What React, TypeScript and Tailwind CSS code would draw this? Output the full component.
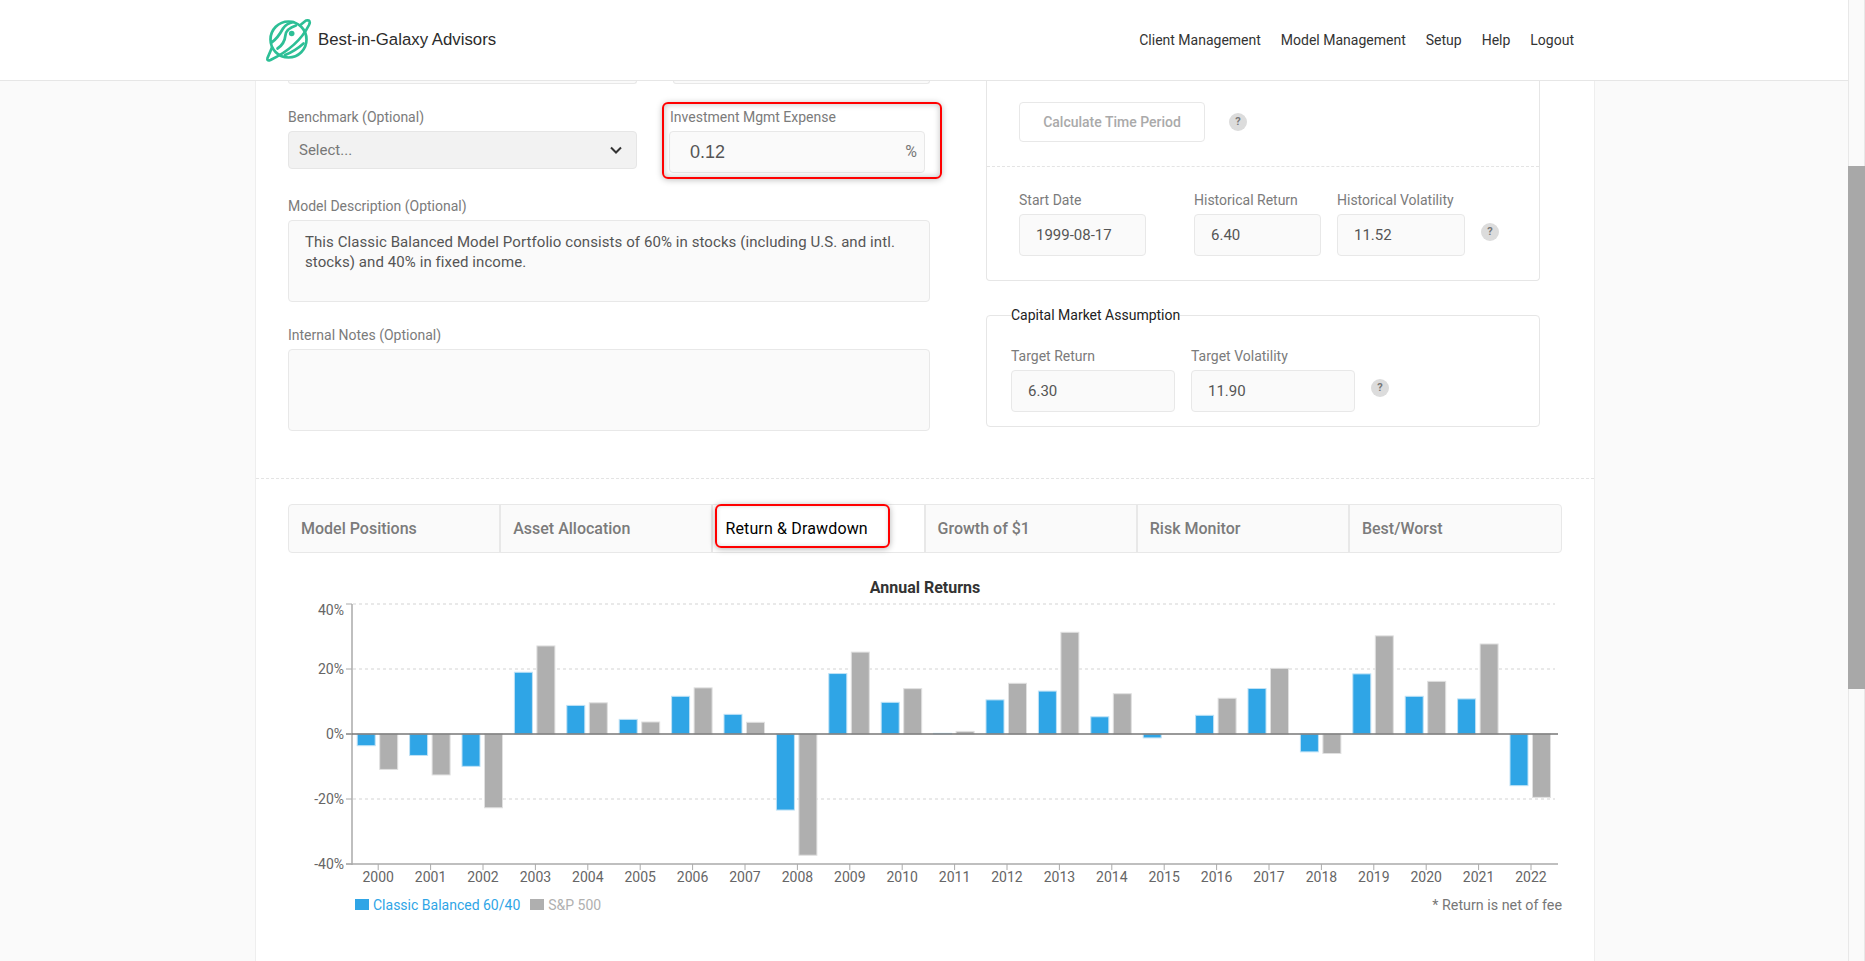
const returns = [
  { year: 2000, model: -3.6, spx: -10.9 },
  { year: 2001, model: -6.6, spx: -12.6 },
  { year: 2002, model: -9.95, spx: -22.7 },
  { year: 2003, model: 19, spx: 27.1 },
  { year: 2004, model: 8.8, spx: 9.6 },
  { year: 2005, model: 4.5, spx: 3.7 },
  { year: 2006, model: 11.6, spx: 14.2 },
  { year: 2007, model: 6.05, spx: 3.6 },
  { year: 2008, model: -23.4, spx: -37.3 },
  { year: 2009, model: 18.6, spx: 25.2 },
  { year: 2010, model: 9.75, spx: 13.95 },
  { year: 2011, model: 0.2, spx: 0.8 },
  { year: 2012, model: 10.5, spx: 15.6 },
  { year: 2013, model: 13.2, spx: 31.3 },
  { year: 2014, model: 5.3, spx: 12.4 },
  { year: 2015, model: -1.2, spx: 0 },
  { year: 2016, model: 5.75, spx: 11 },
  { year: 2017, model: 14, spx: 20.2 },
  { year: 2018, model: -5.5, spx: -6 },
  { year: 2019, model: 18.5, spx: 30.2 },
  { year: 2020, model: 11.6, spx: 16.2 },
  { year: 2021, model: 10.8, spx: 27.7 },
  { year: 2022, model: -15.9, spx: -19.5 },
];

const navItems = ["Client Management", "Model Management", "Setup", "Help", "Logout"];
const tabs = ["Model Positions", "Asset Allocation", "Return & Drawdown", "Growth of $1", "Risk Monitor", "Best/Worst"];

function Logo() {
  return (
    <svg width="47" height="46" viewBox="0 0 47 46" fill="none" stroke="#2dbf96" strokeWidth="2.700" strokeLinecap="round" strokeLinejoin="round">
      <circle cx="23.500" cy="22.500" r="18" />
      {/* ring */}
      <path d="M7 30.500L2.500 41Q1.500 44.500 5.500 43C20 36 36 24 44 8Q46.500 2.500 41 3.500L36 7.500" />
      {/* stripes */}
      <path d="M6.500 25.500C12 22 15 17 18 11.500C20 8 24 6 28.500 5" />
      <path d="M12.500 31.500C18 28 20 23 20.500 18C21 13.500 25 10.500 31 8.500" />
      <path d="M20 38C28 35 33.500 31 38.500 26.500" />
      <circle cx="26.700" cy="16.500" r="2.800" fill="#2dbf96" stroke="none" />
    </svg>
  );
}

function HelpDot() {
  return (
    <span className="flex h-[18px] w-[18px] shrink-0 items-center justify-center rounded-full bg-[#dcdcdc] text-[11px] font-bold text-[#777]">
      ?
    </span>
  );
}

function Label({ children }: { children: React.ReactNode }) {
  return <div className="mb-1 h-5 text-sm leading-5 text-[#7b7b7b]">{children}</div>;
}

function ValueBox({ value, className }: { value: string; className: string }) {
  return (
    <div className={`flex h-[42px] items-center rounded border border-[#e8e8e8] bg-[#fafafa] pl-4 text-[15px] text-[#555] ${className}`}>
      {value}
    </div>
  );
}

function AnnualReturnsChart() {
  const zero = 734;
  const pct = 3.25;
  const band = 52.4;
  const left = 352;
  const grid = [
    { label: "40%", y: 604, textY: 610 },
    { label: "20%", y: 669, textY: 669 },
    { label: "0%", y: 734, textY: 734 },
    { label: "-20%", y: 799, textY: 799 },
    { label: "-40%", y: 864, textY: 864 },
  ];

  return (
    <svg width="1274" height="294" viewBox="288 598 1274 294" className="block" fontFamily="Roboto, sans-serif">
      {grid.map((g) =>
        g.y === 734 || g.y === 864 ? null : (
          <line key={g.y} x1={353} x2={1555} y1={g.y} y2={g.y} stroke="#e2e2e2" strokeWidth="1.500" strokeDasharray="3 3" />
        ),
      )}
      {returns.map((r, i) => {
        const x = left + band * i + 26.2;
        const bar = (value: number, bx: number, fill: string, edge: string) => {
          const h = Math.abs(value) * pct;
          return (
            <rect x={bx} y={value >= 0 ? zero - h : zero} width="18" height={h} fill={fill} stroke={edge} strokeWidth="1" />
          );
        };
        return (
          <g key={r.year}>
            {bar(r.model, x - 21, "#2fa5e6", "#bfe2f6")}
            {bar(r.spx, x + 1.5, "#afafaf", "#e0e0e0")}
            <line x1={x} x2={x} y1={864} y2={870} stroke="#aaa" />
            <text x={x} y={882} textAnchor="middle" fontSize="14" fill="#666">
              {r.year}
            </text>
          </g>
        );
      })}
      <line x1={352} x2={352} y1={604} y2={865} stroke="#aaa" strokeWidth="1.500" />
      <line x1={346} x2={1558} y1={864} y2={864} stroke="#aaa" strokeWidth="1.500" />
      <line x1={346} x2={1558} y1={734} y2={734} stroke="#777" strokeWidth="1.500" />
      {grid.map((g) => (
        <g key={g.label}>
          <line x1={346} x2={352} y1={g.y} y2={g.y} stroke="#aaa" />
          <text x={344} y={g.textY + 5} textAnchor="end" fontSize="14" fill="#666">
            {g.label}
          </text>
        </g>
      ))}
    </svg>
  );
}

export default function App() {
  return (
    <div className="flex h-[961px] overflow-hidden bg-[#fafafa] font-['Roboto',sans-serif]">
      <div className="flex min-w-0 flex-1 flex-col">
        {/* Top bar */}
        <header className="flex h-[81px] shrink-0 items-center justify-between border-b border-[#e6e6e6] bg-white pl-[265px] pr-[274px]">
          <div className="flex items-center gap-[6px]">
            <Logo />
            <span className="font-['Liberation_Sans',sans-serif] text-[16.800px] text-[#2b2b2b]">Best-in-Galaxy Advisors</span>
          </div>
          <nav className="flex gap-[20px] text-sm font-normal text-[#333]">
            {navItems.map((item) => (
              <span key={item}>{item}</span>
            ))}
          </nav>
        </header>

        {/* Page panel */}
        <main className="ml-[255px] w-[1340px] flex-1 border-x border-[#eeeeee] bg-white">
          <div className="flex h-[398px] border-b border-dashed border-[#e4e4e4] pl-[32px]">
            {/* Left form column */}
            <div className="w-[642px]">
              <div className="flex justify-between">
                <div className="h-[3px] w-[349px] rounded-b border-x border-b border-[#e8e8e8] bg-[#fafafa]" />
                <div className="h-[3px] w-[257px] rounded-b border-x border-b border-[#e8e8e8] bg-[#fafafa]" />
              </div>
              <div className="mt-[23px] flex">
                <div className="w-[349px]">
                  <Label>Benchmark (Optional)</Label>
                  <div className="flex h-[38px] items-center justify-between rounded border border-[#e6e6e6] bg-[#f2f2f2] pl-[10px] pr-[13px] text-[15px] text-[#777]">
                    <span>Select...</span>
                    <svg width="14" height="10" viewBox="0 0 14 10" fill="none" stroke="#333" strokeWidth="2">
                      <path d="M2 2.500L7 7.500L12 2.500" />
                    </svg>
                  </div>
                </div>
                <div className="relative ml-[32px] w-[256px]">
                  <div className="pl-px">
                    <Label>Investment Mgmt Expense</Label>
                  </div>
                  <div className="flex h-[42px] items-center justify-between rounded border border-[#e8e8e8] bg-[#fafafa] pl-[20px] pr-[7px] text-[#555]">
                    <span className="font-['Liberation_Sans',sans-serif] text-lg">0.12</span>
                    <span className="text-base text-[#777]">%</span>
                  </div>
                  <div className="absolute -left-[7px] -top-[5px] h-[77px] w-[280px] rounded-md border-2 border-[#f00] shadow-[0_1px_6px_rgba(0,0,0,0.25),inset_0_0_6px_rgba(0,0,0,0.25)]" />
                </div>
              </div>
              <div className="mt-[23px]">
                <Label>Model Description (Optional)</Label>
                <div className="h-[82px] rounded border border-[#e8e8e8] bg-[#fafafa] px-4 py-[11px] text-[15px] leading-5 tracking-[0.08px] text-[#555]">
                  This Classic Balanced Model Portfolio consists of 60% in stocks (including U.S. and intl.
                  <br />
                  stocks) and 40% in fixed income.
                </div>
              </div>
              <div className="mt-[23px]">
                <Label>Internal Notes (Optional)</Label>
                <div className="h-[82px] rounded border border-[#e8e8e8] bg-[#fafafa]" />
              </div>
            </div>

            {/* Right column */}
            <div className="ml-[56px] w-[554px]">
              <div className="h-[200px] rounded-b border-x border-b border-[#e6e6e6]">
                <div className="flex h-[86px] items-start gap-6 border-b border-dashed border-[#e4e4e4] pl-[32px] pt-[21px]">
                  <div className="flex h-10 w-[186px] items-center justify-center rounded border border-[#e8e8e8] bg-white text-sm font-medium text-[#aaa]">
                    Calculate Time Period
                  </div>
                  <div className="mt-[11px]">
                    <HelpDot />
                  </div>
                </div>
                <div className="flex pl-[32px] pt-[23px]">
                  <div className="mr-[48px]">
                    <Label>Start Date</Label>
                    <ValueBox value="1999-08-17" className="w-[127px]" />
                  </div>
                  <div className="mr-[16px]">
                    <Label>Historical Return</Label>
                    <ValueBox value="6.40" className="w-[127px]" />
                  </div>
                  <div>
                    <Label>Historical Volatility</Label>
                    <ValueBox value="11.52" className="w-[128px]" />
                  </div>
                  <div className="ml-[16px] mt-[33px]">
                    <HelpDot />
                  </div>
                </div>
              </div>

              <div className="relative mt-[34px] h-[112px] rounded border border-[#e6e6e6]">
                <span className="absolute -top-[11px] left-[24px] bg-white text-sm leading-5 text-[#222]">Capital Market Assumption</span>
                <div className="flex gap-4 pl-[24px] pt-[30px]">
                  <div>
                    <Label>Target Return</Label>
                    <ValueBox value="6.30" className="w-[164px]" />
                  </div>
                  <div>
                    <Label>Target Volatility</Label>
                    <ValueBox value="11.90" className="w-[164px]" />
                  </div>
                  <div className="mt-[33px]">
                    <HelpDot />
                  </div>
                </div>
              </div>
            </div>
          </div>

          {/* Tabs */}
          <div className="mx-[32px] mt-[25px] grid h-[49px] w-[1274px] grid-cols-[repeat(5,212.200px)_1fr] rounded border border-[#e8e8e8] bg-[#fafafa]">
            {tabs.map((tab, i) => {
              const active = i === 2;
              return (
                <div
                  key={tab}
                  className={`relative flex items-center border-[#e8e8e8] pl-3 text-base ${i < 5 ? "border-r-2" : ""} ${active ? "bg-white font-normal tracking-[0.15px] text-black" : "font-medium text-[#7b7b7b]"}`}
                >
                  {tab}
                  {active && (
                    <div className="absolute -top-px left-[2px] h-[44px] w-[175px] rounded-md border-2 border-[#f00] shadow-[0_1px_6px_rgba(0,0,0,0.3),inset_0_0_4px_rgba(0,0,0,0.15)]" />
                  )}
                </div>
              );
            })}
          </div>

          {/* Chart */}
          <div className="ml-[32px] mt-[25px] w-[1274px]">
            <div className="h-5 text-center text-base font-bold leading-5 text-[#333]">Annual Returns</div>
            <AnnualReturnsChart />
            <div className="mt-[2px] flex items-center justify-between pl-[67px] text-sm">
              <div className="flex items-center">
                <span className="mr-1 h-[11px] w-[14px] bg-[#2fa5e6]" />
                <span className="text-[#2fa5e6]">Classic Balanced 60/40</span>
                <span className="ml-[10px] mr-1 h-[11px] w-[14px] bg-[#afafaf]" />
                <span className="text-[#b0b0b0]">S&amp;P 500</span>
              </div>
              <span className="mt-px text-[14.300px] text-[#777]">* Return is net of fee</span>
            </div>
          </div>
        </main>
      </div>

      {/* Window scrollbar */}
      <div className="flex w-[17px] shrink-0 flex-col border-x border-[#e8e8e8] bg-[#fafafa]">
        <div className="h-[166px]" />
        <div className="-mx-px h-[523px] bg-[#a8a8a8]" />
      </div>
    </div>
  );
}
